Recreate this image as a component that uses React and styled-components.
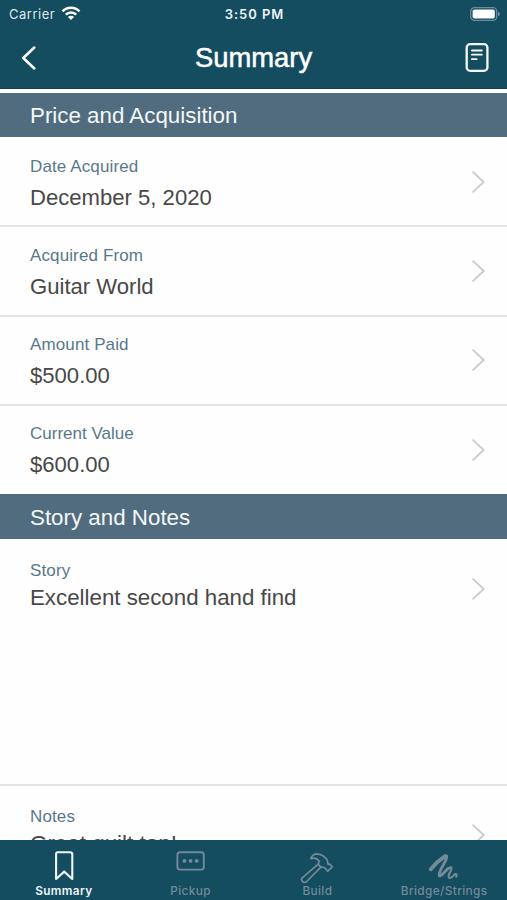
import React from "react";
import styled, { createGlobalStyle } from "styled-components";

const GlobalStyle = createGlobalStyle`
  html, body { margin: 0; padding: 0; background: #fff; }
  * { box-sizing: border-box; }
`;

const Screen = styled.div`
  width: 507px;
  height: 900px;
  overflow: hidden;
  display: flex;
  flex-direction: column;
  background: #fefefe;
  font-family: "Liberation Sans", Arial, sans-serif;
`;

const Header = styled.header`
  flex: none;
  height: 89px;
  background: #144c60;
  border-bottom: 1px solid #0f4256;
`;

const StatusBar = styled.div`
  height: 27px;
  display: grid;
  grid-template-columns: 1fr auto 1fr;
  align-items: center;
  padding: 0 7px 0 9px;
  color: #dfe8eb;
  font-family: Inter, sans-serif;
  font-size: 13px;
`;

const Carrier = styled.div`
  display: flex;
  align-items: center;
  gap: 6px;
  letter-spacing: 0.5px;
`;

const Clock = styled.div`
  color: #eef4f6;
  font-weight: 600;
  letter-spacing: 0.95px;
`;

const BatterySlot = styled.div`
  display: flex;
  justify-content: flex-end;
`;

const NavBar = styled.div`
  height: 61px;
  display: grid;
  grid-template-columns: 1fr auto 1fr;
  align-items: center;
  padding: 0 18px 0 21px;
`;

const Title = styled.h1`
  margin: 0;
  padding-right: 3px;
  color: #fff;
  font-size: 27.4px;
  font-weight: 400;
  line-height: 60px;
  -webkit-text-stroke: 0.5px #fff;
`;

const NavButton = styled.button`
  justify-self: ${(p) => (p.$end ? "end" : "start")};
  display: flex;
  padding: 0;
  border: 0;
  background: none;
`;

const Content = styled.main`
  flex: 1;
  min-height: 0;
  overflow: hidden;
  padding-top: 4px;
`;

const SectionTitle = styled.h2`
  margin: 0;
  height: ${(p) => p.$height}px;
  padding-left: 30px;
  background: #506c7e;
  color: #f4f8fa;
  font-size: 22.35px;
  font-weight: 400;
  line-height: ${(p) => p.$line}px;
`;

const Row = styled.div`
  display: flex;
  justify-content: space-between;
  height: ${(p) => p.$height}px;
  padding: ${(p) => p.$top}px 21px 0 30px;
  border-bottom: ${(p) => (p.$last ? "0" : "2px solid #e1e3e4")};
`;

const Label = styled.div`
  color: #58788a;
  font-size: 17px;
  line-height: 20px;
  letter-spacing: ${(p) => p.$tracking}px;
`;

const Value = styled.div`
  margin-top: ${(p) => p.$gap}px;
  color: #484848;
  font-size: ${(p) => p.$size}px;
  line-height: 26px;
`;

const ChevronSlot = styled.div`
  padding-top: ${(p) => p.$offset}px;
`;

const TabBar = styled.nav`
  flex: none;
  height: 60px;
  display: grid;
  grid-template-columns: repeat(4, 1fr);
  background: #144c60;
`;

const Tab = styled.button`
  display: flex;
  flex-direction: column;
  align-items: center;
  min-width: 0;
  padding: 9px 0 0 1px;
  border: 0;
  background: none;
  color: ${(p) => (p.$active ? "#eef8fb" : "#728b96")};
  font: ${(p) => (p.$active ? 600 : 500)} 11.8px/16px Inter, sans-serif;
  letter-spacing: 0.38px;
  white-space: nowrap;
`;

const TabIcon = styled.svg`
  width: 36px;
  height: 34px;
  overflow: visible;
  fill: none;
  stroke: currentColor;
  stroke-linecap: round;
  stroke-linejoin: round;
`;

const WifiIcon = () => (
  <svg width="20" height="15" viewBox="0 0 20 15" fill="none" stroke="#fff" strokeWidth="2.5">
    <path d="M1.5 5.3C6.2.6 13.8.6 18.5 5.3" />
    <path d="M4.8 8.6C7.7 5.7 12.3 5.7 15.2 8.6" />
    <path d="M10 14L6.9 10.9C8.5 9.4 11.5 9.4 13.1 10.9Z" fill="#fff" stroke="none" />
  </svg>
);

const BatteryIcon = () => (
  <svg width="30" height="14" viewBox="0 0 30 14">
    <rect x=".7" y=".6" width="26" height="12.8" rx="3.7" fill="none" stroke="#6d8d99" strokeWidth="1.3" />
    <rect x="2.6" y="2.5" width="22.2" height="9" rx="1.8" fill="#fff" />
    <path d="M28 4.8Q30 5.6 30 7T28 9.2Z" fill="#6d8d99" />
  </svg>
);

const BackIcon = () => (
  <svg width="16" height="24" viewBox="0 0 16 24" fill="none" stroke="#fff" strokeWidth="2.5" strokeLinecap="round" strokeLinejoin="round">
    <path d="M13.3 1.5L2.3 12L13.3 22.5" />
  </svg>
);

const NoteIcon = () => (
  <svg width="24" height="30" viewBox="0 0 24 30" fill="none" stroke="#f4fafc" strokeLinecap="round">
    <rect x="1.7" y="1.2" width="20.7" height="26.6" rx="3.4" strokeWidth="2.3" />
    <path d="M6.9 7.5H16.9M6.9 11.7H16.9M6.9 16.2H11.6" strokeWidth="1.8" />
  </svg>
);

const Chevron = () => (
  <svg width="16" height="24" viewBox="0 0 16 24" fill="none" stroke="#c9cccd" strokeWidth="1.9">
    <path d="M2.6 1.6L13.7 12L2.6 22.4" />
  </svg>
);

const icons = {
  Summary: (
    <path d="M11.4 3.2H24.1Q26.3 3.2 26.3 5.4V30L18.2 22.6L10.1 30V5.4Q10.1 3.2 11.4 3.2Z" strokeWidth="2.1" />
  ),
  Pickup: (
    <>
      <rect x="4.4" y="3.2" width="26.4" height="17.4" rx="2.6" strokeWidth="1.9" />
      <path d="M11.4 11.9H11.5M17.5 11.9H17.6M23.6 11.9H23.7" strokeWidth="3.8" />
    </>
  ),
  Build: (
    <g strokeWidth="1.7">
      <path d="M19.2 15.2L3.2 28.8Q1.8 30.6 3.4 32.4T7.2 33L22.4 17.7" />
      <path d="M19.2 15.2L21.8 18.1L25.4 18.5L28.8 22.1L33.2 17.8L30.8 15.1L29 15.3L28.3 11.1Q24.2 5 17.4 4.8Q13.2 5.3 11.9 9.6Q17.3 8.1 20.2 12.3Z" />
    </g>
  ),
  "Bridge/Strings": (
    <>
      <path d="M4.8 20.2Q11 12.4 18.7 7.3" strokeWidth="4" />
      <path d="M18.7 7.1C22.5 5 20.2 11.2 17.7 15.2C15.3 19.3 12.4 24.6 13.2 26.6C14.1 28.8 18.5 22.4 22.2 19.5" strokeWidth="2.9" />
      <path d="M21.6 20.1C26.6 15.9 25.9 20.1 24.2 22.9C22.5 25.7 21.9 29 24 29C26.3 28.9 27.2 26.4 29 25.2C30.6 24.3 31 26 30.2 27.7" strokeWidth="2.1" />
    </>
  ),
};

const acquisition = [
  { label: "Date Acquired", value: "December 5, 2020", height: 90, top: 20 },
  { label: "Acquired From", value: "Guitar World", height: 90, top: 19 },
  { label: "Amount Paid", value: "$500.00", height: 89, top: 18 },
  { label: "Current Value", value: "$600.00", height: 88, top: 18, tracking: 0, chevron: 14 },
];

const notes = [
  { label: "Story", value: "Excellent second hand find", height: 247, top: 22, size: 22.3 },
  { label: "Notes", value: "Great quilt top!", height: 120, top: 21, size: 22.4 },
];

function DetailRow({ label, value, height, top, last, gap = 8, tracking = 0.12, size = 22.1, chevron = 13 }) {
  return (
    <Row $height={height} $top={top} $last={last}>
      <div>
        <Label $tracking={tracking}>{label}</Label>
        <Value $gap={gap} $size={size}>{value}</Value>
      </div>
      <ChevronSlot $offset={chevron}>
        <Chevron />
      </ChevronSlot>
    </Row>
  );
}

export default function App() {
  return (
    <>
      <GlobalStyle />
      <Screen>
        <Header>
          <StatusBar>
            <Carrier>
              Carrier
              <WifiIcon />
            </Carrier>
            <Clock>3:50 PM</Clock>
            <BatterySlot>
              <BatteryIcon />
            </BatterySlot>
          </StatusBar>
          <NavBar>
            <NavButton aria-label="Back">
              <BackIcon />
            </NavButton>
            <Title>Summary</Title>
            <NavButton $end aria-label="Report">
              <NoteIcon />
            </NavButton>
          </NavBar>
        </Header>
        <Content>
          <SectionTitle $height={44} $line={45}>Price and Acquisition</SectionTitle>
          {acquisition.map((item, i) => (
            <DetailRow key={item.label} {...item} last={i === acquisition.length - 1} />
          ))}
          <SectionTitle $height={45} $line={47}>Story and Notes</SectionTitle>
          {notes.map((item, i) => (
            <DetailRow key={item.label} {...item} gap={4} chevron={16} last={i === notes.length - 1} />
          ))}
        </Content>
        <TabBar>
          {Object.keys(icons).map((name) => (
            <Tab key={name} $active={name === "Summary"}>
              <TabIcon viewBox="0 0 36 34">{icons[name]}</TabIcon>
              {name}
            </Tab>
          ))}
        </TabBar>
      </Screen>
    </>
  );
}
